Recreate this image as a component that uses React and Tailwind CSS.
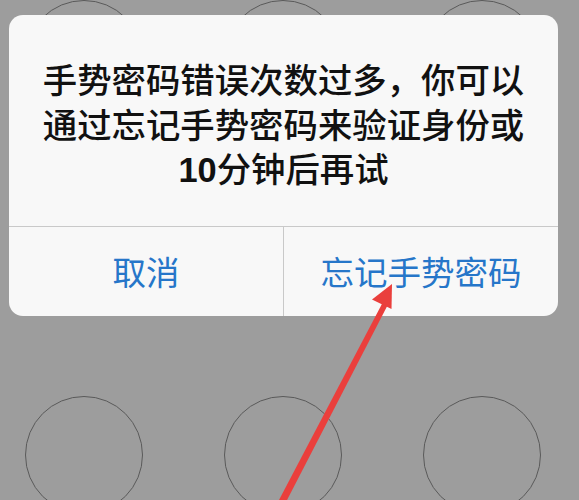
import React from "react";

const font = { fontFamily: '"Noto Sans CJK SC", "Noto Sans", sans-serif' };

function Circle() {
  return <div className="w-[118px] h-[118px] rounded-full border border-[#5a5a5a]" />;
}

function Arrow() {
  return (
    <svg className="absolute left-0 top-0 pointer-events-none" width="579" height="500" viewBox="0 0 579 500">
      <polygon points="383.5,301 388.5,303.5 286,502 279,500" fill="#ea3f3c" />
      <polygon points="392,284 372,299.5 391.5,309" fill="#ea3f3c" />
    </svg>
  );
}

export default function App() {
  const rows = [0, 1, 2];
  return (
    <div className="relative w-[579px] h-[500px] overflow-hidden bg-[#9d9d9d]" style={font}>
      <div className="grid grid-cols-[118px_118px_118px] gap-x-[81px] gap-y-[80px] pl-[25px]">
        {rows.map((r) =>
          rows.map((c) => <Circle key={`${r}-${c}`} />)
        )}
      </div>

      <div className="absolute left-[9px] top-[15px] w-[549px] rounded-[14px] bg-[#f8f8f8] overflow-hidden">
        <div className="pt-[41px] pb-[33px] text-center text-[34.4px] leading-[44.5px] font-medium text-[#111]">
          <p>手势密码错误次数过多，你可以</p>
          <p>通过忘记手势密码来验证身份或</p>
          <p>
            <span className="font-bold" style={{ fontFamily: '"Liberation Sans", sans-serif' }}>10</span>分钟后再试
          </p>
        </div>
        <div className="flex h-[90px] border-t border-[#c9c9c9] text-[33.5px] text-[#2676c9]">
          <div className="flex-1 flex items-center justify-center border-r border-[#c9c9c9]">取消</div>
          <div className="flex-1 flex items-center justify-center">忘记手势密码</div>
        </div>
      </div>

      <Arrow />
    </div>
  );
}
